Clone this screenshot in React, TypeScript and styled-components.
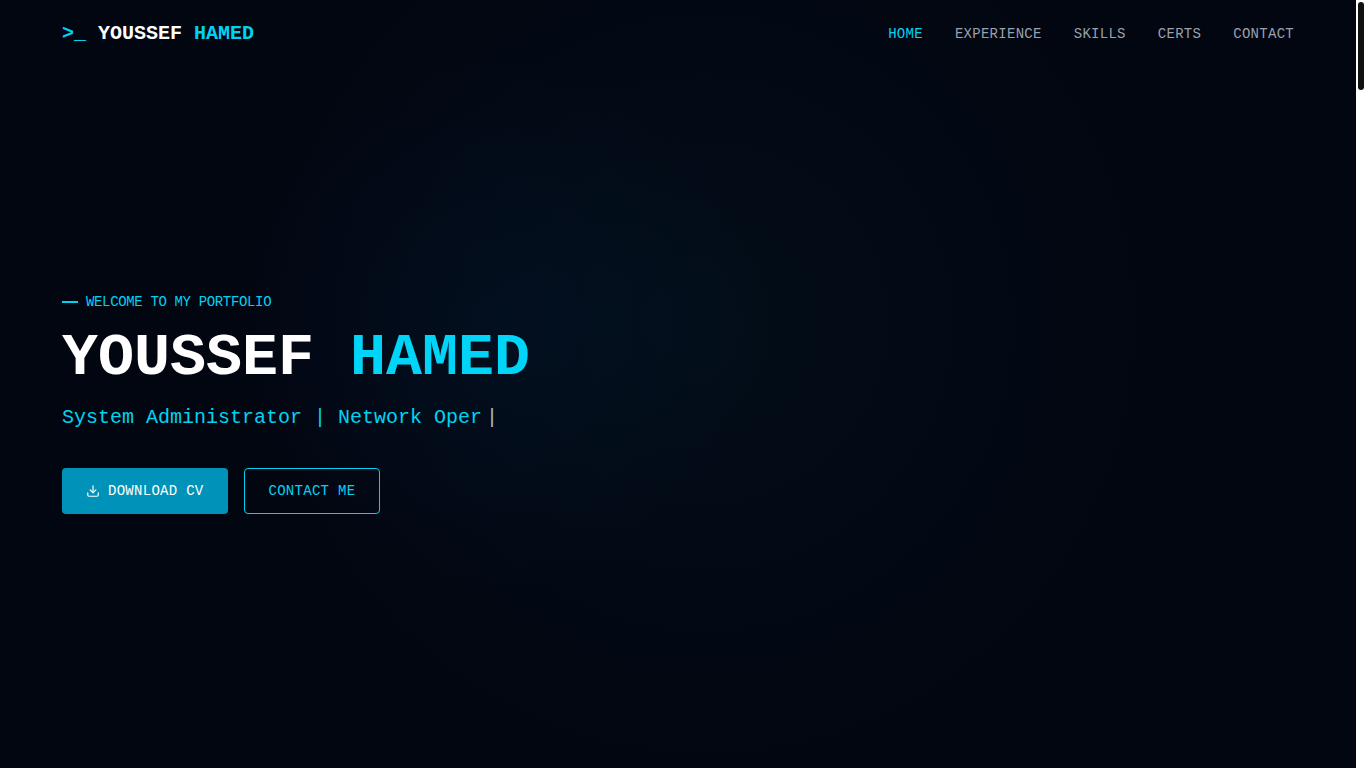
import React from "react";
import styled, { createGlobalStyle } from "styled-components";

const GlobalStyle = createGlobalStyle`
  *, *::before, *::after { box-sizing: border-box; }
  body {
    margin: 0;
    background: #020611;
    color: #99a1af;
    font-family: "Liberation Mono", monospace;
  }
`;

const Shell = styled.div`
  display: grid;
  grid-template-columns: 1fr 10px;
  min-height: 100vh;
`;

const Page = styled.div`
  display: flex;
  flex-direction: column;
  background:
    radial-gradient(circle 270px at 37% 42%, rgba(0, 60, 120, 0.1), rgba(0, 60, 120, 0)),
    radial-gradient(circle 460px at 52% 42%, rgba(0, 75, 85, 0.11), rgba(0, 75, 85, 0)),
    #020611;
`;

const ScrollTrack = styled.div`
  background: #ffffff;
  padding: 2px;
`;

const ScrollThumb = styled.div`
  height: 88px;
  border-radius: 3px;
  background: #111111;
`;

const Container = styled.div`
  width: 100%;
  max-width: 1280px;
  margin: 0 auto;
  padding: 0 24px;
`;

const HeaderRow = styled(Container)`
  display: flex;
  align-items: center;
  justify-content: space-between;
  height: 68px;
`;

const Accent = styled.span`
  color: #00d3f2;
`;

const HeadingAccent = styled.span`
  color: #00d5f8;
`;

const Logo = styled.a`
  color: #ffffff;
  font-size: 20px;
  line-height: 28px;
  font-weight: 700;
  text-decoration: none;
`;

const Nav = styled.nav`
  display: flex;
  gap: 32px;
`;

const NavLink = styled.a<{ $active?: boolean }>`
  color: ${(p) => (p.$active ? "#00d3f2" : "#99a1af")};
  font-size: 14px;
  line-height: 20px;
  letter-spacing: 0.02em;
  text-decoration: none;
`;

const Hero = styled.main`
  flex: 1;
  display: flex;
  align-items: center;
  padding-bottom: 30px;
`;

const Welcome = styled.p`
  display: flex;
  align-items: center;
  gap: 8px;
  margin: 0 0 16px;
  color: #00d3f2;
  font-size: 14px;
  line-height: 20px;
  letter-spacing: -0.025em;

  &::before {
    content: "";
    width: 16px;
    height: 2px;
    background: #00d3f2;
  }
`;

const Title = styled.h1`
  margin: 0 0 16px;
  color: #ffffff;
  font-size: 60px;
  line-height: 60px;
  font-weight: 700;
`;

const Role = styled.p`
  margin: 0 0 36px;
  color: #00d3f2;
  font-size: 20px;
  line-height: 28px;
`;

const Caret = styled.span`
  margin-left: 4px;
  color: #b0b6c2;
`;

const Actions = styled.div`
  display: flex;
  gap: 16px;
`;

const Button = styled.button<{ $outline?: boolean }>`
  display: flex;
  align-items: center;
  gap: 8px;
  padding: ${(p) => (p.$outline ? "12px 24px" : "13px 24px")};
  border: ${(p) => (p.$outline ? "1px solid #00d3f2" : "0")};
  border-radius: 4px;
  background: ${(p) => (p.$outline ? "transparent" : "#0092b8")};
  color: ${(p) => (p.$outline ? "#00d3f2" : "#ffffff")};
  font-family: inherit;
  font-size: 14px;
  line-height: 20px;
  letter-spacing: 0.02em;
  cursor: pointer;
`;

const links = ["HOME", "EXPERIENCE", "SKILLS", "CERTS", "CONTACT"];

const DownloadIcon = () => (
  <svg
    width="14"
    height="14"
    viewBox="0 0 24 24"
    fill="none"
    stroke="currentColor"
    strokeWidth="2"
    strokeLinecap="round"
    strokeLinejoin="round"
    aria-hidden="true"
  >
    <path d="M21 15v4a2 2 0 0 1-2 2H5a2 2 0 0 1-2-2v-4" />
    <polyline points="7 10 12 15 17 10" />
    <line x1="12" y1="15" x2="12" y2="3" />
  </svg>
);

export default function App() {
  return (
    <>
      <GlobalStyle />
      <Shell>
        <Page>
          <header>
            <HeaderRow>
              <Logo href="#home">
                <Accent>&gt;_</Accent> YOUSSEF <Accent>HAMED</Accent>
              </Logo>
              <Nav>
                {links.map((label, i) => (
                  <NavLink key={label} href={`#${label.toLowerCase()}`} $active={i === 0}>
                    {label}
                  </NavLink>
                ))}
              </Nav>
            </HeaderRow>
          </header>
          <Hero id="home">
            <Container>
              <Welcome>WELCOME TO MY PORTFOLIO</Welcome>
              <Title>
                YOUSSEF <HeadingAccent>HAMED</HeadingAccent>
              </Title>
              <Role>
                System Administrator | Network Oper<Caret>|</Caret>
              </Role>
              <Actions>
                <Button type="button">
                  <DownloadIcon />
                  DOWNLOAD CV
                </Button>
                <Button type="button" $outline>
                  CONTACT ME
                </Button>
              </Actions>
            </Container>
          </Hero>
        </Page>
        <ScrollTrack aria-hidden="true">
          <ScrollThumb />
        </ScrollTrack>
      </Shell>
    </>
  );
}
